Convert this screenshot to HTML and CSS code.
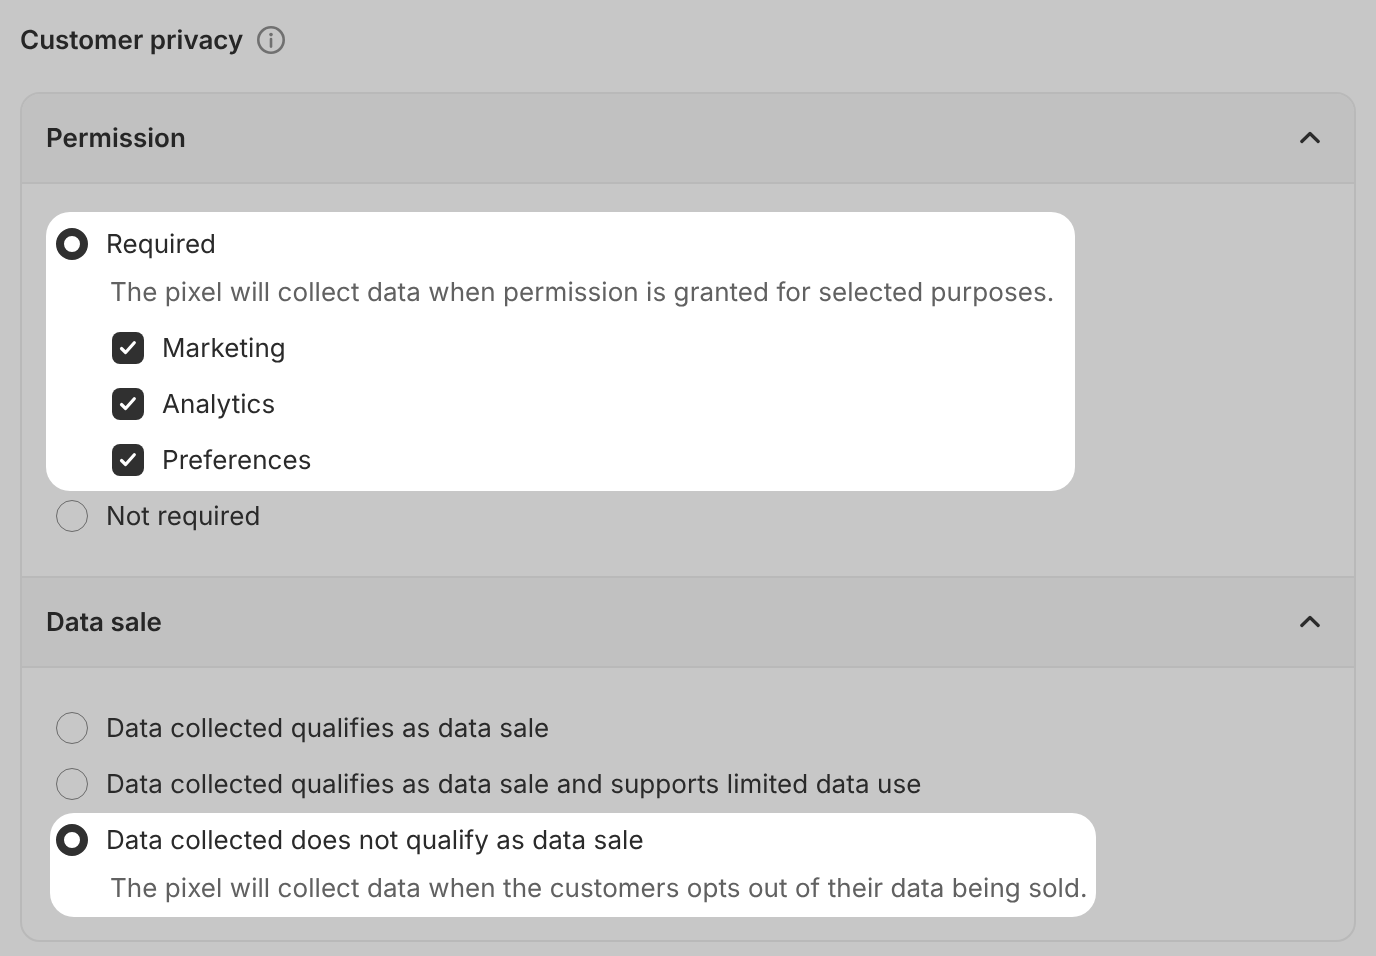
FILE: index.html
```html
<!DOCTYPE html>
<html lang="en">
<head>
<meta charset="utf-8">
<title>Customer privacy</title>
<link rel="stylesheet" href="styles.css">
</head>
<body>
<div class="page">
  <div class="title-row">
    <h1 class="title">Customer privacy</h1>
    <svg class="info" width="28" height="28" viewBox="0 0 28 28" fill="none">
      <circle cx="14" cy="14" r="12.7" stroke="#707070" stroke-width="2.6"/>
      <circle cx="14" cy="8.6" r="1.8" fill="#707070"/>
      <path d="M14 13v7.600" stroke="#707070" stroke-width="2.600" stroke-linecap="round"/>
    </svg>
  </div>
  <div class="card">
    <div class="section-head">
      <span class="head-text">Permission</span>
      <svg class="chev" width="20" height="14" viewBox="0 0 20 14" fill="none"><path d="M1.800 10.500 10 2.500l8.200 8" stroke="#2c2c2c" stroke-width="3.200" stroke-linecap="round" stroke-linejoin="round"/></svg>
    </div>
    <div class="section-body first">
      <div class="hl hl-a">
        <div class="row">
          <span class="radio on"></span><span class="label">Required</span>
        </div>
        <p class="desc">The pixel will collect data when permission is granted for selected purposes.</p>
        <div class="checks">
          <div class="check-row"><span class="box"><svg width="22" height="22" viewBox="0 0 22 22" fill="none"><path d="M4.500 11.500 8.600 15.500 17.300 5.800" stroke="#fff" stroke-width="3.200" stroke-linecap="round" stroke-linejoin="round"/></svg></span><span class="label">Marketing</span></div>
          <div class="check-row"><span class="box"><svg width="22" height="22" viewBox="0 0 22 22" fill="none"><path d="M4.500 11.500 8.600 15.500 17.300 5.800" stroke="#fff" stroke-width="3.200" stroke-linecap="round" stroke-linejoin="round"/></svg></span><span class="label">Analytics</span></div>
          <div class="check-row"><span class="box"><svg width="22" height="22" viewBox="0 0 22 22" fill="none"><path d="M4.500 11.500 8.600 15.500 17.300 5.800" stroke="#fff" stroke-width="3.200" stroke-linecap="round" stroke-linejoin="round"/></svg></span><span class="label">Preferences</span></div>
        </div>
      </div>
      <div class="row plain after-hl">
        <span class="radio"></span><span class="label">Not required</span>
      </div>
    </div>
    <div class="section-head divided">
      <span class="head-text">Data sale</span>
      <svg class="chev" width="20" height="14" viewBox="0 0 20 14" fill="none"><path d="M1.800 10.500 10 2.500l8.200 8" stroke="#2c2c2c" stroke-width="3.200" stroke-linecap="round" stroke-linejoin="round"/></svg>
    </div>
    <div class="section-body second">
      <div class="row plain"><span class="radio"></span><span class="label">Data collected qualifies as data sale</span></div>
      <div class="row plain gap"><span class="radio"></span><span class="label">Data collected qualifies as data sale and supports limited data use</span></div>
      <div class="hl hl-b">
        <div class="row">
          <span class="radio on"></span><span class="label">Data collected does not qualify as data sale</span>
        </div>
        <p class="desc">The pixel will collect data when the customers opts out of their data being sold.</p>
      </div>
    </div>
  </div>
</div>
</body>
</html>
```

FILE: styles.css
```css
* { box-sizing: border-box; }
html, body { margin: 0; padding: 0; height: 100%; }
body {
  background: #c7c7c7;
  color: #2a2a2a;
  font-family: Inter, "Liberation Sans", sans-serif;
  font-size: 26px;
  line-height: 40px;
  overflow: hidden;
  text-rendering: geometricPrecision;
}
.page { padding: 20px 20px 0; transform: translateZ(0); }
.title-row { display: flex; align-items: center; gap: 14px; height: 40px; }
.title { margin: 0; padding-top: 2px; font-size: 26px; line-height: 40px; font-weight: 600; color: #262626; }
.info { display: block; }
.card {
  margin-top: 32px;
  width: 1336px;
  height: 850px;
  border: 2px solid #b9b9b9;
  border-radius: 20px;
  overflow: hidden;
}
.section-head {
  display: flex;
  align-items: center;
  justify-content: space-between;
  height: 90px;
  padding: 0 24px;
  background: #c1c1c1;
  border-bottom: 2px solid #b9b9b9;
  font-weight: 600;
  color: #262626;
}
.head-text { padding-top: 2px; }
.section-head.divided { height: 92px; border-top: 2px solid #b9b9b9; }
.chev { display: block; margin-right: 10px; }
.section-body.first { padding: 28px 24px 40px; height: 392px; }
.section-body.second { padding: 40px 24px 0; }
.row { display: flex; align-items: center; height: 40px; }
.row.plain { padding-left: 10px; }
.row.gap { margin-top: 16px; }
.after-hl { margin-top: 5px; }
.radio {
  flex: none;
  width: 32px;
  height: 32px;
  border-radius: 50%;
  border: 1.500px solid #6a6a6a;
  margin-right: 18px;
}
.radio.on { border: 8px solid #303030; background: #fff; }
.hl { background: #fff; border-radius: 24px; }
.hl-a { width: 1029px; padding: 12px 0 11px 10px; }
.hl-b { width: 1046px; margin: 9px 0 0 4px; padding: 7px 0 9px 6px; }
.desc { margin: 8px 0 0 54px; padding-top: 1px; color: #616161; white-space: nowrap; height: 40px; letter-spacing: 0.06px; }
.checks { margin-top: 16px; display: flex; flex-direction: column; gap: 16px; padding-left: 56px; }
.check-row { display: flex; align-items: center; height: 40px; }
.box {
  flex: none;
  display: flex;
  align-items: center;
  justify-content: center;
  width: 32px;
  height: 32px;
  border-radius: 8px;
  background: #303030;
  margin-right: 18px;
}
.label { white-space: nowrap; padding-top: 2px; letter-spacing: 0.07px; }
```
